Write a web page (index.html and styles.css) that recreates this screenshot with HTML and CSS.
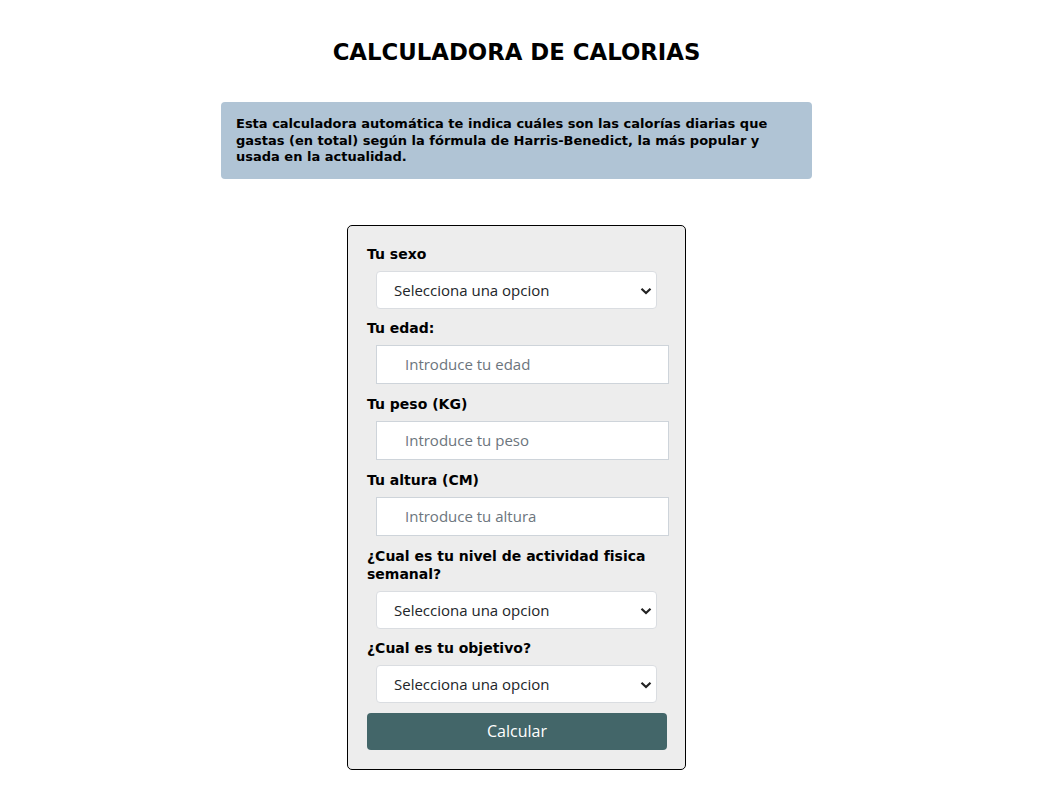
FILE: index.html
```html
<!DOCTYPE html>
<html lang="es">
<head>
<meta charset="utf-8">
<title>Calculadora de calorias</title>
<link rel="stylesheet" href="styles.css">
</head>
<body>
<main class="page">
  <h1 class="title">CALCULADORA DE CALORIAS</h1>
  <p class="intro">Esta calculadora automática te indica cuáles son las calorías diarias que gastas (en total) según la fórmula de Harris-Benedict, la más popular y usada en la actualidad.</p>
  <form class="card">
    <label class="label" for="sexo">Tu sexo</label>
    <div class="select-wrap">
      <select id="sexo" class="select"><option>Selecciona una opcion</option></select>
      <svg class="chev" width="12" height="8" viewBox="0 0 12 8"><path d="M1.5 1.8 L6 6 L10.5 1.8" fill="none" stroke="#222" stroke-width="2.2"/></svg>
    </div>
    <label class="label" for="edad">Tu edad:</label>
    <input id="edad" class="input" type="text" placeholder="Introduce tu edad">
    <label class="label" for="peso">Tu peso (KG)</label>
    <input id="peso" class="input" type="text" placeholder="Introduce tu peso">
    <label class="label" for="altura">Tu altura (CM)</label>
    <input id="altura" class="input" type="text" placeholder="Introduce tu altura">
    <label class="label" for="act">¿Cual es tu nivel de actividad fisica semanal?</label>
    <div class="select-wrap">
      <select id="act" class="select"><option>Selecciona una opcion</option></select>
      <svg class="chev" width="12" height="8" viewBox="0 0 12 8"><path d="M1.5 1.8 L6 6 L10.5 1.8" fill="none" stroke="#222" stroke-width="2.2"/></svg>
    </div>
    <label class="label" for="obj">¿Cual es tu objetivo?</label>
    <div class="select-wrap">
      <select id="obj" class="select"><option>Selecciona una opcion</option></select>
      <svg class="chev" width="12" height="8" viewBox="0 0 12 8"><path d="M1.5 1.8 L6 6 L10.5 1.8" fill="none" stroke="#222" stroke-width="2.2"/></svg>
    </div>
    <button type="button" class="btn">Calcular</button>
  </form>
</main>
</body>
</html>
```
FILE: styles.css
```css
html, body {
  margin: 0;
  padding: 0;
  background: #fff;
}
body {
  font-family: "DejaVu Sans", Verdana, sans-serif;
  color: #000;
}
.page {
  width: 1033px;
  display: flex;
  flex-direction: column;
  align-items: center;
  padding-top: 36px;
  padding-bottom: 30px;
}
.title {
  margin: 0;
  font-size: 22.8px;
  line-height: 32px;
  font-weight: bold;
}
.intro {
  box-sizing: border-box;
  width: 591px;
  margin: 34px 0 0 0;
  padding: 14px 15px 13px;
  background: #b0c4d5;
  border-radius: 4px;
  font-size: 13px;
  line-height: 16.5px;
  font-weight: bold;
}
.card {
  box-sizing: border-box;
  width: 339px;
  margin-top: 46px;
  padding: 19px;
  border: 1px solid #000;
  border-radius: 5px;
  background: #ededed;
  display: flex;
  flex-direction: column;
  align-items: flex-start;
}
.label {
  font-size: 14px;
  line-height: 18px;
  font-weight: bold;
  margin-bottom: 8px;
}
.select-wrap {
  position: relative;
  margin: 0 0 10px 9px;
  width: 281px;
  height: 38px;
}
.select {
  -webkit-appearance: none;
  appearance: none;
  box-sizing: border-box;
  width: 281px;
  height: 38px;
  margin: 0;
  padding: 0 30px 0 17px;
  border: 1px solid #dadde1;
  border-radius: 4px;
  background: #fff;
  font-family: "Open Sans", "Noto Sans", sans-serif;
  font-size: 15px;
  color: #212529;
}
.chev {
  position: absolute;
  right: 5px;
  top: 16px;
  pointer-events: none;
}
.input {
  box-sizing: border-box;
  width: 293px;
  height: 39px;
  margin: 0 0 11px 9px;
  padding: 0 28px;
  border: 1px solid #ced4da;
  border-radius: 0;
  background: #fff;
  font-family: "Open Sans", "Noto Sans", sans-serif;
  font-size: 15px;
  color: #212529;
  outline: none;
}
.input::placeholder {
  color: #6c757d;
}
.btn {
  box-sizing: border-box;
  width: 300px;
  height: 37px;
  margin: 0;
  border: none;
  border-radius: 4px;
  background: #436669;
  color: #fff;
  font-family: "Open Sans", "Noto Sans", sans-serif;
  font-size: 16px;
  cursor: pointer;
}
```
